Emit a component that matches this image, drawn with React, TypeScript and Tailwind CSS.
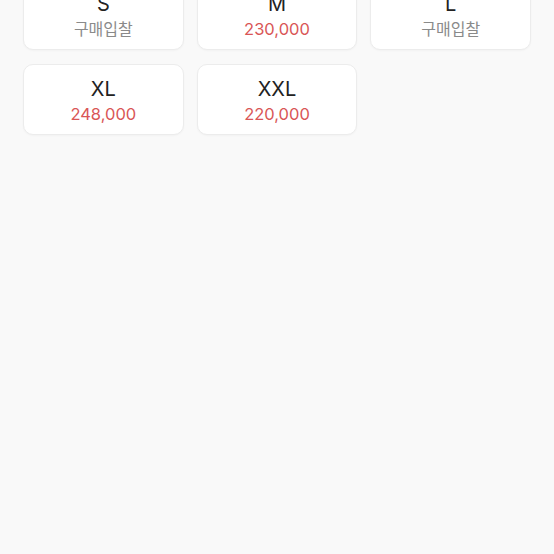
import React from "react";

const items = [
  { size: "S", price: null },
  { size: "M", price: "230,000" },
  { size: "L", price: null },
  { size: "XL", price: "248,000" },
  { size: "XXL", price: "220,000" },
];

export default function App() {
  return (
    <div
      className="w-[554px] h-[554px] overflow-hidden bg-[#f9f9f9]"
      style={{ fontFamily: 'Inter, "Noto Sans CJK KR", sans-serif' }}
    >
      <div className="grid grid-cols-3 gap-x-[13px] gap-y-[14px] px-[23px] -mt-[21px]">
        {items.map((it) => (
          <div
            key={it.size}
            className="h-[71px] rounded-[10px] border border-[#ececec] bg-white flex flex-col items-center pt-[12px] shadow-[0_1px_2px_rgba(0,0,0,0.03)]"
          >
            <div className="text-[20px] leading-[24px] text-[#222]">{it.size}</div>
            {it.price ? (
              <div className="text-[16.5px] leading-[22px] text-[#d95656] mt-[2px]">{it.price}</div>
            ) : (
              <div className="text-[16px] leading-[22px] text-[#8a8a8a] mt-[2px]">구매입찰</div>
            )}
          </div>
        ))}
      </div>
    </div>
  );
}
